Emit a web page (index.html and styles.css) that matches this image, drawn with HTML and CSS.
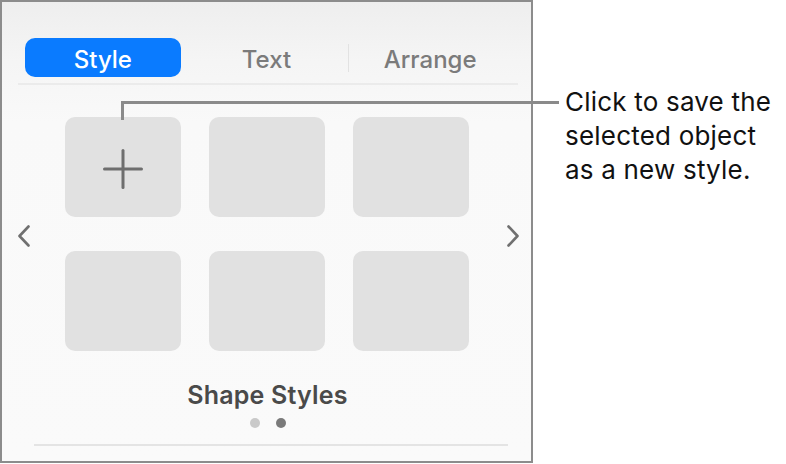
FILE: index.html
```html
<!DOCTYPE html>
<html>
<head>
<meta charset="utf-8">
<link rel="stylesheet" href="styles.css">
</head>
<body>
<div class="page">
  <div class="panel">
    <div class="tabs">
      <div class="tab active"><span class="pill">Style</span></div>
      <div class="tab">Text</div>
      <div class="tab divided">Arrange</div>
    </div>
    <div class="sep"></div>
    <div class="gallery">
      <svg class="chev" width="14" height="22" viewBox="0 0 14 22"><polyline points="11.5,1.5 2.5,11 11.5,20.5" fill="none" stroke="#707070" stroke-width="2.6" stroke-linecap="round" stroke-linejoin="round"/></svg>
      <div class="grid">
        <div class="tile plus">
          <svg width="40" height="40" viewBox="0 0 40 40"><line x1="20" y1="1.5" x2="20" y2="38.5" stroke="#6e6e6e" stroke-width="3" stroke-linecap="round"/><line x1="1.5" y1="20" x2="38.5" y2="20" stroke="#6e6e6e" stroke-width="3" stroke-linecap="round"/></svg>
        </div>
        <div class="tile"></div>
        <div class="tile"></div>
        <div class="tile"></div>
        <div class="tile"></div>
        <div class="tile"></div>
      </div>
      <svg class="chev right" width="14" height="22" viewBox="0 0 14 22"><polyline points="2.5,1.5 11.5,11 2.5,20.5" fill="none" stroke="#707070" stroke-width="2.6" stroke-linecap="round" stroke-linejoin="round"/></svg>
    </div>
    <div class="title">Shape Styles</div>
    <div class="dots"><span class="dot"></span><span class="dot on"></span></div>
    <div class="bottom-line"></div>
  </div>
  <div class="callout">Click to save the<br>selected object<br>as a new style.</div>
  <div class="leader"></div>
</div>
</body>
</html>
```
FILE: styles.css
```css
html, body {
  margin: 0;
  padding: 0;
  background: #ffffff;
}
body {
  width: 786px;
  height: 464px;
  overflow: hidden;
  font-family: "Inter", "Roboto", "Liberation Sans", sans-serif;
}
.page {
  position: relative;
  display: flex;
  align-items: flex-start;
  width: 786px;
  height: 464px;
}
.panel {
  box-sizing: border-box;
  width: 533px;
  height: 463px;
  border: 2px solid #8c8c8c;
  background: linear-gradient(180deg, #eeeeee 0px, #f5f5f5 60px, #f9f9f9 120px, #fafafa 100%);
  display: flex;
  flex-direction: column;
}
.tabs {
  margin-top: 36px;
  margin-left: 19px;
  width: 491px;
  height: 39px;
  display: grid;
  grid-template-columns: 1fr 1fr 1fr;
}
.tab {
  display: flex;
  align-items: center;
  justify-content: center;
  font-size: 24px;
  font-weight: 500;
  color: #7b7b7b;
  position: relative;
  padding-top: 3px;
}
.tab.divided::before {
  content: "";
  position: absolute;
  left: 0;
  top: 6px;
  height: 28px;
  width: 1px;
  background: #e2e2e2;
}
.tab.active {
  padding: 0 4px;
}
.pill {
  flex: 1;
  height: 39px;
  box-sizing: border-box;
  padding-top: 3px;
  border-radius: 10px;
  background: #0a7bff;
  color: #ffffff;
  display: flex;
  align-items: center;
  justify-content: center;
}
.sep {
  margin-top: 6px;
  margin-left: 16px;
  width: 500px;
  height: 2px;
  background: #ebebeb;
}
.gallery {
  margin-top: 32px;
  display: flex;
  align-items: center;
}
.chev {
  margin-left: 15px;
  margin-top: 4px;
  display: block;
}
.chev.right {
  margin-left: 37px;
}
.grid {
  margin-left: 34px;
  display: grid;
  grid-template-columns: repeat(3, 116px);
  grid-auto-rows: 100px;
  column-gap: 28px;
  row-gap: 34px;
}
.tile {
  background: #e1e1e1;
  border-radius: 10px;
  display: flex;
  align-items: center;
  justify-content: center;
}
.tile.plus svg {
  margin-top: 3px;
}
.title {
  margin-top: 29px;
  text-align: center;
  margin-left: 2px;
  font-size: 25px;
  line-height: 30px;
  font-weight: 600;
  color: #4a4a4a;
  letter-spacing: 0.2px;
}
.dots {
  margin-top: 8px;
  display: flex;
  justify-content: center;
  gap: 16px;
  margin-left: 2px;
}
.dot {
  width: 10px;
  height: 10px;
  border-radius: 50%;
  background: #c9c9c9;
}
.dot.on {
  background: #7a7a7a;
}
.bottom-line {
  margin-top: 16px;
  margin-left: 32px;
  width: 474px;
  height: 2px;
  background: #e4e4e4;
}
.callout {
  margin-left: 32px;
  margin-top: 85px;
  font-size: 26px;
  line-height: 34px;
  letter-spacing: 0.2px;
  color: #111111;
  white-space: nowrap;
}
.leader {
  position: absolute;
  left: 121px;
  top: 101px;
  width: 435px;
  height: 16px;
  border-top: 3px solid #8a8a8a;
  border-left: 3px solid #8a8a8a;
}
```
